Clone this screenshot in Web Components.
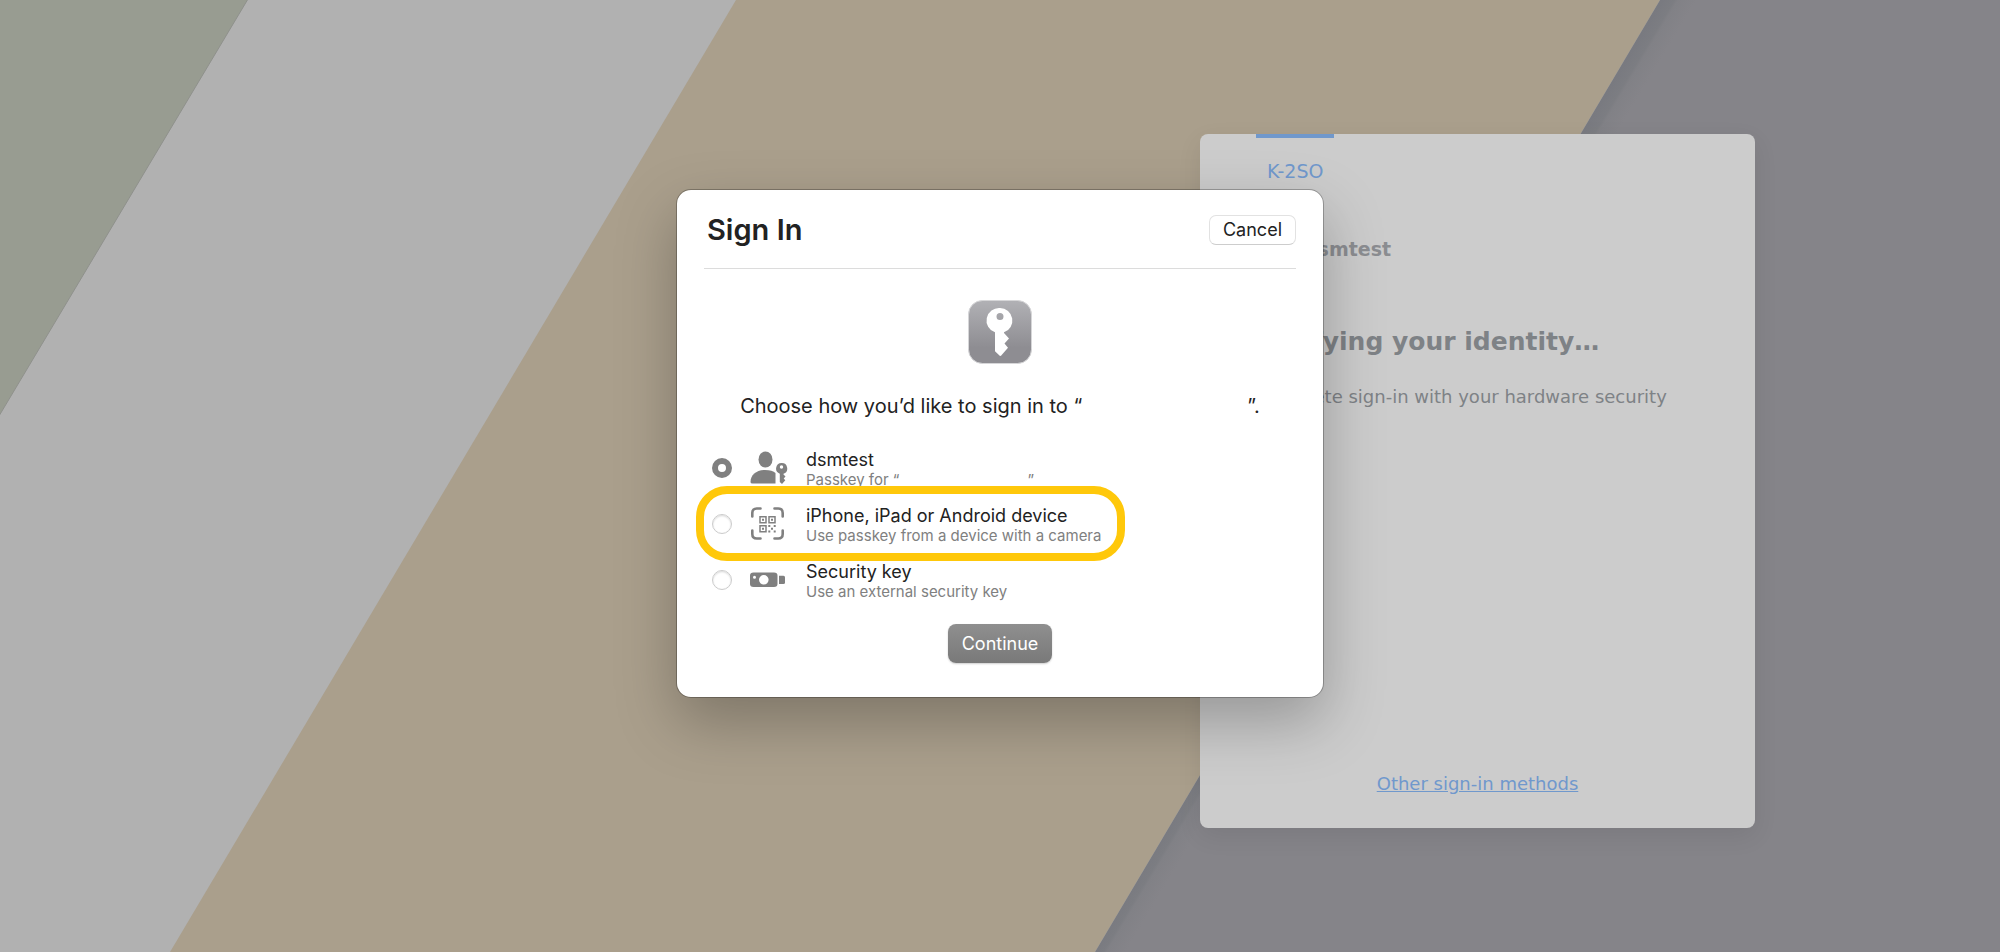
<!DOCTYPE html>
<html lang="en">
<head>
<meta charset="utf-8">
<meta name="viewport" content="width=device-width, initial-scale=1">
<title>Sign In</title>
<style>
    html, body {
        margin: 0;
        min-height: 100%;
    }
    body {
        overflow: hidden;
    }
</style>
</head>
<body>
<sign-in-page>
    <login-card slot="card" tab="K-2SO" user="dsmtest" heading="Verifying your identity…">
        Complete sign-in with your hardware security key.
        <a slot="footer" href="#methods">Other sign-in methods</a>
    </login-card>
    <passkey-dialog slot="dialog" heading="Sign In">
        <span slot="prompt">Choose how you’d like to sign in to “<span class="site"></span>”.</span>
        <passkey-option checked>
            <svg slot="icon" width="38" height="34" viewBox="0 0 38 34" fill="#808080" aria-hidden="true">
                <ellipse cx="15.500" cy="8.500" rx="7" ry="8"/>
                <path d="M.5 31c0-7 6-12 14.500-12 5 0 8.500 1 10.500 3v10.500H2.500Q.5 32.500.5 31z"/>
                <path fill-rule="evenodd" d="M31.500 12a5.500 5.500 0 0 1 2 10.700v.8l2 2-1.800 2 1.600 1.800-3.300 3.700-2.200-2v-8.300A5.500 5.500 0 0 1 31.500 12zm0 2.300a1.700 1.700 0 1 0 0 3.400 1.700 1.700 0 0 0 0-3.400z"/>
            </svg>
            dsmtest
            <span slot="detail">Passkey for “<span class="site"></span>”</span>
        </passkey-option>
        <passkey-option highlighted>
            <svg slot="icon" width="38" height="34" viewBox="0 0 38 34" fill="none" stroke="#808080" aria-hidden="true">
                <path stroke-width="2.600" stroke-linecap="round" d="M2.300 9.500V6q0-4.500 4.500-4.500h3.700M24.500 1.500h3.700q4.500 0 4.500 4.500v3.500M2.300 23.500V27q0 4.500 4.500 4.500h3.700M24.500 31.500h3.700q4.500 0 4.500-4.500v-3.500"/>
                <path stroke-width="1.500" d="M10 9.700h6v6h-6zM19 9.700h6v6h-6zM10 18.700h6v6h-6z"/>
                <path fill="#808080" stroke="none" d="M12 11.700h2v2h-2zM21 11.700h2v2h-2zM12 20.700h2v2h-2zM18.300 18h2v2h-2zM23.700 18h2v2h-2zM21 20.700h2v2h-2zM18.300 23.400h2v2h-2zM23.700 23.400h2v2h-2z"/>
            </svg>
            iPhone, iPad or Android device
            <span slot="detail">Use passkey from a device with a camera</span>
        </passkey-option>
        <passkey-option>
            <svg slot="icon" width="38" height="34" viewBox="0 0 38 34" fill="#808080" aria-hidden="true">
                <path fill-rule="evenodd" d="M3.500 9.500h20.500q3.500 0 3.500 3v8.500q0 3-3.500 3H3.500q-3.500 0-3.500-3v-8.500q0-3 3.500-3zM13.800 12a4.800 4.800 0 1 0 0 9.600 4.800 4.800 0 0 0 0-9.600zM4.500 12.800a1.500 1.500 0 1 0 0 3 1.500 1.500 0 0 0 0-3z"/>
                <path d="M29 12.700h4.500q1.500 0 1.500 1.500v5.200q0 1.500-1.500 1.500H29z"/>
            </svg>
            Security key
            <span slot="detail">Use an external security key</span>
        </passkey-option>
    </passkey-dialog>
</sign-in-page>

<script>
// Full-window page: striped backdrop, login card on the right, dialog on top
class SignInPage extends HTMLElement {
    constructor() {
        super();
        this.attachShadow({ mode: 'open' });
        this.shadowRoot.innerHTML = `
            <style>
                :host {
                    display: block;
                    position: relative;
                    min-height: 100vh;
                    background: #b1b1b1;
                }
                .backdrop {
                    position: absolute;
                    inset: 0;
                    width: 100%;
                    height: 100%;
                }
                main {
                    position: relative;
                    display: flex;
                    justify-content: flex-end;
                    padding: 134px 12.25% 0 0;
                }
                .overlay {
                    position: absolute;
                    inset: 0;
                    display: flex;
                    justify-content: center;
                    align-items: flex-start;
                    padding-top: 189px;
                }
            </style>
            <svg class="backdrop" viewBox="0 0 2000 952" preserveAspectRatio="none" aria-hidden="true">
                <defs>
                    <linearGradient id="edge" gradientUnits="userSpaceOnUse" x1="1377" y1="476" x2="1402" y2="491">
                        <stop offset="0" stop-color="#797a80"/>
                        <stop offset=".35" stop-color="#7c7d82"/>
                        <stop offset=".45" stop-color="#818186"/>
                        <stop offset="1" stop-color="#858489"/>
                    </linearGradient>
                </defs>
                <path fill="#989c91" stroke="#8f918c" d="M-1-1h249L-1 416z"/>
                <path fill="#aa9f8c" d="M736 0h924L1095 952H170z"/>
                <path fill="url(#edge)" d="M1660 0h340v952H1095z"/>
            </svg>
            <main><slot name="card"></slot></main>
            <div class="overlay"><slot name="dialog"></slot></div>
        `;
    }
}

// Dimmed login card behind the dialog
class LoginCard extends HTMLElement {
    connectedCallback() {
        this.attachShadow({ mode: 'open' });
        this.shadowRoot.innerHTML = `
            <style>
                :host {
                    display: flex;
                    flex-direction: column;
                    box-sizing: border-box;
                    width: 555px;
                    min-height: 694px;
                    padding: 0 56px 28px;
                    border-radius: 8px;
                    background: #cccccc;
                    box-shadow: 0 8px 24px rgba(0, 0, 0, 0.08);
                    color: #7e8286;
                    font: 18px/32px Verdana, "DejaVu Sans", sans-serif;
                }
                .tab {
                    align-self: flex-start;
                    padding: 17px 11px 0;
                    border: 0;
                    border-top: 4px solid #7098cc;
                    background: none;
                    color: #7098cc;
                    font: inherit;
                    font-size: 19px;
                }
                .user {
                    margin: 46px 0 0;
                    padding-left: 48px;
                    color: #8b8d91;
                    font-size: 19px;
                    font-weight: bold;
                }
                h1 {
                    margin: 61px 0 0;
                    font-size: 25px;
                    line-height: 32px;
                    white-space: nowrap;
                }
                .text {
                    margin: 23px 0 0;
                }
                footer {
                    margin-top: auto;
                    text-align: center;
                }
                ::slotted(a) {
                    color: #7098cc;
                }
            </style>
            <button class="tab" type="button">${this.getAttribute('tab')}</button>
            <p class="user">${this.getAttribute('user')}</p>
            <h1>${this.getAttribute('heading')}</h1>
            <p class="text"><slot></slot></p>
            <footer><slot name="footer"></slot></footer>
        `;
    }
}

// Passkey dialog: header, app icon, prompt, options and the main button
class PasskeyDialog extends HTMLElement {
    connectedCallback() {
        this.attachShadow({ mode: 'open' });
        this.shadowRoot.innerHTML = `
            <style>
                :host {
                    display: block;
                    box-sizing: border-box;
                    width: 648px;
                    max-width: 100%;
                    padding: 0 27px 34px;
                    border: 1px solid rgba(0, 0, 0, 0.25);
                    background-clip: padding-box;
                    border-radius: 15px;
                    background-color: #ffffff;
                    box-shadow: 0 24px 60px rgba(0, 0, 0, 0.26);
                    color: #222222;
                    font: 18px/20px Inter, sans-serif;
                }
                header {
                    display: flex;
                    justify-content: space-between;
                    align-items: center;
                    height: 76px;
                    padding-top: 2px;
                    border-bottom: 1px solid #dcdcdc;
                }
                h2 {
                    margin: 0 0 0 3px;
                    font-size: 29px;
                    line-height: 36px;
                    font-weight: 600;
                }
                button {
                    font: inherit;
                }
                .cancel {
                    height: 30px;
                    padding: 0 13px;
                    border: 1px solid #e2e2e2;
                    border-bottom-color: #cdcdcd;
                    border-radius: 7px;
                    background: #ffffff;
                    color: #222222;
                }
                .app-icon {
                    display: block;
                    margin: 31px auto 0;
                }
                .prompt {
                    margin: 27px 0 0;
                    font-size: 20px;
                    line-height: 30px;
                    text-align: center;
                    white-space: nowrap;
                    --site-width: 165px;
                }
                fieldset {
                    min-width: 0;
                    margin: 19px 0 0;
                    padding: 0;
                    border: 0;
                    --site-width: 128px;
                }
                .continue {
                    display: block;
                    height: 39px;
                    margin: 16px auto 0;
                    padding: 0 14px;
                    border: 0;
                    border-radius: 8px;
                    background: linear-gradient(#8f8f8f, #797979);
                    box-shadow: 0 1px 2px rgba(0, 0, 0, 0.2);
                    color: #ffffff;
                }
            </style>
            <header>
                <h2>${this.getAttribute('heading')}</h2>
                <button class="cancel" type="button">Cancel</button>
            </header>
            <svg class="app-icon" width="64" height="64" viewBox="0 0 64 64" aria-hidden="true">
                <defs>
                    <linearGradient id="face" x2="0" y2="1">
                        <stop offset="0" stop-color="#b1b1b5"/>
                        <stop offset=".75" stop-color="#8e8d92"/>
                        <stop offset="1" stop-color="#8e8d92"/>
                    </linearGradient>
                </defs>
                <rect x=".5" y=".5" width="63" height="63" rx="14" fill="url(#face)" stroke="#d6d6d8"/>
                <path fill="#ffffff" fill-rule="evenodd" d="M32 8a12.500 12.500 0 0 1 4 24.300v.7l5 5.500-4.500 5 3.500 4.200-7 8-1 .3-5-4.800V32.300A12.500 12.500 0 0 1 32 8zm0 5a3.500 3.500 0 1 0 0 7 3.500 3.500 0 0 0 0-7z"/>
            </svg>
            <p class="prompt"><slot name="prompt"></slot></p>
            <fieldset aria-label="Sign-in method"><slot></slot></fieldset>
            <button class="continue" type="button">Continue</button>
        `;

        // The site name is left blank, only its room is kept
        this.querySelectorAll('.site').forEach(site => {
            site.style.display = 'inline-block';
            site.style.width = 'var(--site-width)';
        });

        // Radios sit in separate shadow roots, so keep only one of them on
        this.addEventListener('option-picked', event => {
            this.querySelectorAll('passkey-option').forEach(option => {
                option.radio.checked = option === event.target;
            });
        });
    }
}

class PasskeyOption extends HTMLElement {
    connectedCallback() {
        this.attachShadow({ mode: 'open' });
        this.shadowRoot.innerHTML = `
            <style>
                :host {
                    display: block;
                    position: relative;
                    width: fit-content;
                }
                :host([highlighted])::after {
                    content: '';
                    position: absolute;
                    inset: -10px -24px -9px -8px;
                    border: 8px solid #ffc80a;
                    border-radius: 31px;
                    pointer-events: none;
                }
                :host([highlighted]) {
                    z-index: 1;
                }
                label {
                    display: flex;
                    align-items: center;
                    height: 56px;
                    padding-left: 8px;
                }
                input {
                    appearance: none;
                    box-sizing: border-box;
                    width: 20px;
                    height: 20px;
                    margin: 0 18px 0 0;
                    border: 1px solid #cccccc;
                    border-radius: 50%;
                    background: #ffffff;
                    box-shadow: inset 0 1px 2px rgba(0, 0, 0, 0.15);
                }
                input:checked {
                    border: 6px solid #808080;
                    box-shadow: none;
                }
                ::slotted(svg) {
                    display: block;
                    margin-right: 18px;
                }
                .text {
                    display: flex;
                    flex-direction: column;
                    padding-top: 4px;
                    white-space: nowrap;
                }
                .detail {
                    color: #808080;
                    font-size: 15px;
                }
            </style>
            <label>
                <input type="radio" name="method" ${this.hasAttribute('checked') ? 'checked' : ''}>
                <slot name="icon"></slot>
                <span class="text">
                    <span><slot></slot></span>
                    <span class="detail"><slot name="detail"></slot></span>
                </span>
            </label>
        `;
        this.radio = this.shadowRoot.querySelector('input');
        this.radio.addEventListener('change', () => {
            this.dispatchEvent(new CustomEvent('option-picked', { bubbles: true }));
        });
    }
}

customElements.define('sign-in-page', SignInPage);
customElements.define('login-card', LoginCard);
customElements.define('passkey-dialog', PasskeyDialog);
customElements.define('passkey-option', PasskeyOption);
</script>
</body>
</html>
